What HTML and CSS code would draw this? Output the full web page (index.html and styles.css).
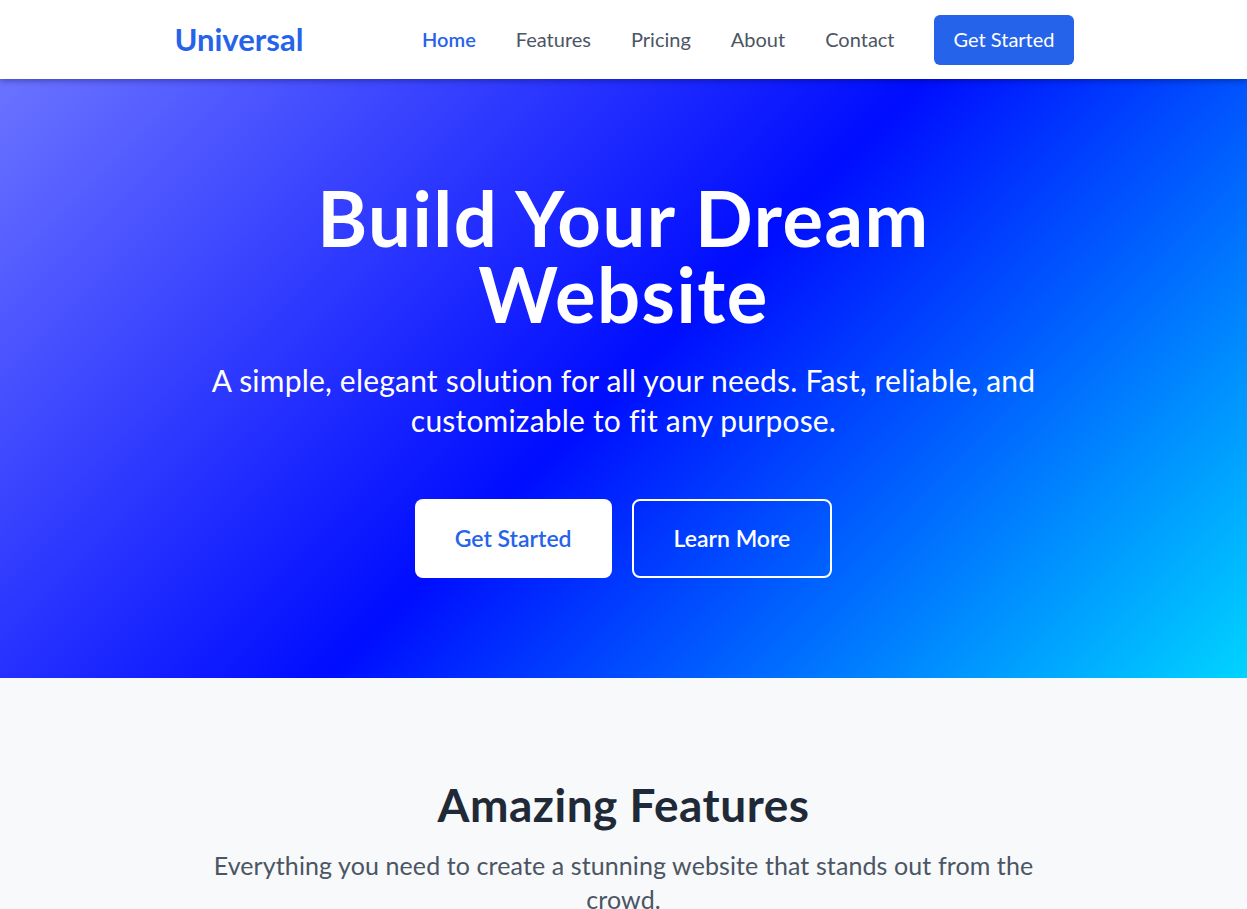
FILE: index.html
```html
<!DOCTYPE html>
<html lang="en">
<head>
<meta charset="utf-8">
<title>Universal</title>
<link rel="stylesheet" href="styles.css">
</head>
<body>
<header class="navbar">
  <div class="container nav-inner">
    <a class="logo" href="#">Universal</a>
    <nav class="nav-links">
      <a class="nav-link active" href="#">Home</a>
      <a class="nav-link" href="#">Features</a>
      <a class="nav-link" href="#">Pricing</a>
      <a class="nav-link" href="#">About</a>
      <a class="nav-link" href="#">Contact</a>
      <a class="nav-cta" href="#">Get Started</a>
    </nav>
  </div>
</header>
<section class="hero">
  <h1 class="hero-title">Build Your Dream<br>Website</h1>
  <p class="hero-sub">A simple, elegant solution for all your needs. Fast, reliable, and customizable to fit any purpose.</p>
  <div class="hero-actions">
    <a class="btn btn-light" href="#">Get Started</a>
    <a class="btn btn-outline" href="#">Learn More</a>
  </div>
</section>
<section class="features">
  <h2 class="section-title">Amazing Features</h2>
  <p class="section-sub">Everything you need to create a stunning website that stands out from the crowd.</p>
</section>
</body>
</html>
```
FILE: styles.css
```css
* { box-sizing: border-box; }
body {
  margin: 0;
  font-family: "Lato", "Open Sans", sans-serif;
  color: #1f2937;
  background: #f8f9fa;
}
a { text-decoration: none; }
.container {
  max-width: 900px;
  margin: 0 auto;
}
.navbar {
  background: #fff;
  height: 79px;
  box-shadow: 0 2px 6px rgba(0, 0, 60, 0.35);
  position: relative;
  z-index: 2;
}
.nav-inner {
  height: 100%;
  display: flex;
  align-items: center;
  justify-content: space-between;
}
.logo {
  font-size: 31px;
  font-weight: 700;
  color: #2563eb;
  padding-left: 1px;
  margin-top: -1px;
}
.nav-links {
  display: flex;
  align-items: center;
  gap: 40px;
}
.nav-link {
  font-size: 20px;
  color: #4b5563;
  margin-top: -2px;
}
.nav-link.active {
  color: #2563eb;
  font-weight: 600;
}
.nav-cta {
  background: #2563eb;
  color: #fff;
  font-size: 20px;
  height: 50px;
  line-height: 48px;
  padding: 0 19px 0 20px;
  border-radius: 6px;
  margin-left: -1px;
}
.hero {
  height: 599px;
  padding-top: 101px;
  text-align: center;
  color: #fff;
  background: linear-gradient(135deg, #6b73ff 0%, #000dff 50%, #00d4ff 100%);
}
.hero-title {
  margin: 0;
  font-size: 76px;
  line-height: 76px;
  font-weight: 700;
  letter-spacing: 1.5px;
}
.hero-sub {
  margin: 28px auto 0;
  max-width: 860px;
  font-size: 30px;
  line-height: 40px;
  letter-spacing: 0.2px;
}
.hero-actions {
  margin-top: 59px;
  display: flex;
  justify-content: center;
  gap: 20px;
}
.btn {
  display: block;
  height: 79px;
  padding: 0 40px;
  border-radius: 8px;
  font-size: 23px;
  font-weight: 600;
}
.btn-light {
  background: #fff;
  color: #2563eb;
  line-height: 79px;
}
.btn-outline {
  background: transparent;
  color: #fff;
  border: 2px solid #fff;
  line-height: 75px;
}
.features {
  padding-top: 101px;
  text-align: center;
}
.section-title {
  margin: 0;
  font-size: 46px;
  line-height: 52px;
  font-weight: 700;
  letter-spacing: 0.5px;
  color: #1f2937;
}
.section-sub {
  margin: 17px auto 0;
  max-width: 840px;
  font-size: 25px;
  line-height: 34px;
  letter-spacing: 0.1px;
  color: #4b5563;
}
```
